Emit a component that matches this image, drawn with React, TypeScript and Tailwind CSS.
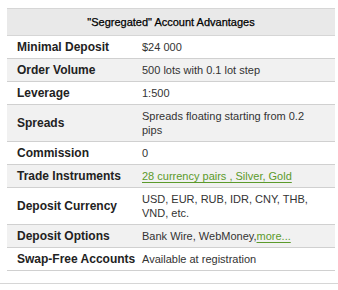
const rows: { label: string; value: React.ReactNode }[] = [
  { label: "Minimal Deposit", value: "$24 000" },
  { label: "Order Volume", value: "500 lots with 0.1 lot step" },
  { label: "Leverage", value: "1:500" },
  { label: "Spreads", value: "Spreads floating starting from 0.2 pips" },
  { label: "Commission", value: "0" },
  {
    label: "Trade Instruments",
    value: (
      <a href="#" className="text-[#5b9a2b] underline underline-offset-2">
        28 currency pairs , Silver, Gold
      </a>
    ),
  },
  { label: "Deposit Currency", value: "USD, EUR, RUB, IDR, CNY, THB, VND, etc." },
  {
    label: "Deposit Options",
    value: (
      <>
        Bank Wire, WebMoney,
        <a href="#" className="text-[#5b9a2b] underline underline-offset-2">
          more...
        </a>
      </>
    ),
  },
  { label: "Swap-Free Accounts", value: "Available at registration" },
];

export default function App() {
  return (
    <div
      className="w-[338px] h-[290px] bg-white pt-2 text-[11px] leading-[14px] text-[#333]"
      style={{ fontFamily: '"Liberation Sans", Arial, sans-serif' }}
    >
      <div className="mx-[7px] w-[328px] border-t border-[#d6d6d6]">
        <div className="h-[27px] flex items-center justify-center bg-[#e9e9e9] border-b border-[#d6d6d6] text-[11px] text-black [-webkit-text-stroke:0.25px_#000]">
          "Segregated" Account Advantages
        </div>
        {rows.map((r, i) => (
          <div
            key={r.label}
            className={`grid grid-cols-[135px_1fr] items-center py-1 border-b border-[#d0d0d0] ${
              i % 2 === 1 ? "bg-[#f1f1f1]" : "bg-white"
            }`}
          >
            <div className="pl-[10px] text-[12px] font-bold text-[#222]">{r.label}</div>
            <div className="pr-4">{r.value}</div>
          </div>
        ))}
      </div>
      <div className="mt-3 border-t border-[#d6d6d6]" />
    </div>
  );
}
